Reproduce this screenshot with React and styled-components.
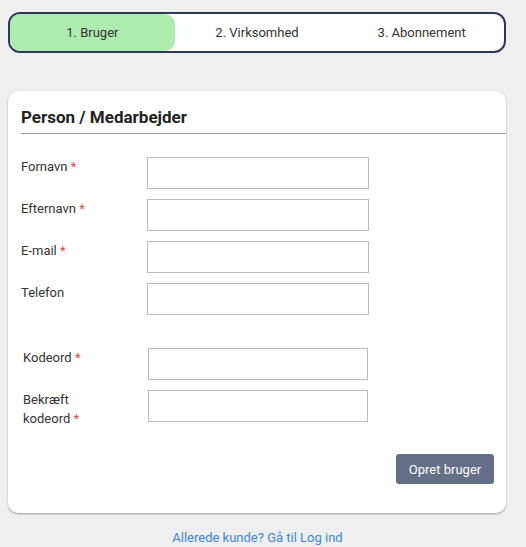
import styled, { createGlobalStyle } from 'styled-components';

const GlobalStyle = createGlobalStyle`
	html, body {
		margin: 0;
		padding: 0;
		background: #efefef;
		font-family: Roboto, "Liberation Sans", Arial, sans-serif;
		color: #333;
	}
	* { box-sizing: border-box; }
`

const Page = styled.div`
	width: 526px;
	padding: 12px 20px 0 8px;
`

const Stepper = styled.div`
	display: grid;
	grid-template-columns: repeat(3, 1fr);
	height: 41px;
	border: 2px solid #2b3a52;
	border-radius: 12px;
	background: #fff;
	overflow: hidden;
`

const Step = styled.div`
	display: flex;
	align-items: center;
	justify-content: center;
	font-size: 13px;
	color: #333;
	background: ${p => p.$active ? '#aeebae' : 'transparent'};
	border-radius: ${p => p.$active ? '0 10px 10px 0' : '0'};
`

const Card = styled.div`
	margin-top: 38px;
	background: #fff;
	border-radius: 10px;
	box-shadow: 0 1px 2px rgba(0, 0, 0, 0.35);
	padding: 14px 0 29px 13px;
`

const Title = styled.h2`
	margin: 0 0 23px;
	font-size: 17px;
	font-weight: 700;
	line-height: 24px;
	color: #222;
	padding-bottom: 4px;
	border-bottom: 1px solid #999;
`

const Group = styled.div`
	display: flex;
	flex-direction: column;
	gap: 10px;
	padding-left: ${p => p.$indent || 0}px;
	margin-top: ${p => p.$top || 0}px;
`

const Row = styled.div`
	display: flex;
	align-items: flex-start;
`

const Label = styled.label`
	width: ${p => p.$width}px;
	flex-shrink: 0;
	font-size: 13px;
	line-height: 19px;
	padding-right: ${p => p.$narrow ? 60 : 0}px;
	color: #333;
`

const Req = styled.span`
	color: #e0474c;
`

const Input = styled.input`
	width: ${p => p.$width}px;
	height: 32px;
	border: 1px solid #bcbcbc;
	border-radius: 0;
	background: #fff;
	font: inherit;
	padding: 0 6px;
	outline: none;
`

const Actions = styled.div`
	display: flex;
	justify-content: flex-end;
	padding-right: 12px;
	margin-top: 26px;
`

const Button = styled.button`
	height: 30px;
	width: 98px;
	border: none;
	border-radius: 3px;
	background: #636e87;
	color: #fff;
	font-family: inherit;
	font-size: 13px;
`

const Footer = styled.div`
	text-align: center;
	margin-top: 14px;
	padding-left: 1px;
`

const Link = styled.a`
	color: #3b86e0;
	font-size: 13px;
	text-decoration: none;
`

const personFields = [
	{ label: 'Fornavn', required: true },
	{ label: 'Efternavn', required: true },
	{ label: 'E-mail', required: true },
	{ label: 'Telefon' },
]

const passwordFields = [
	{ label: 'Kodeord', required: true },
	{ label: 'Bekræft kodeord', required: true, narrow: true },
]

function Field({ label, required, labelWidth, inputWidth, narrow }) {
	return (
		<Row>
			<Label $width={labelWidth} $narrow={narrow}>
				{label}{required && <> <Req>*</Req></>}
			</Label>
			<Input $width={inputWidth} />
		</Row>
	)
}

export default function App() {
	return (
		<>
			<GlobalStyle />
			<Page>
				<Stepper>
					<Step $active>1. Bruger</Step>
					<Step>2. Virksomhed</Step>
					<Step>3. Abonnement</Step>
				</Stepper>
				<Card>
					<Title>Person / Medarbejder</Title>
					<Group>
						{personFields.map(f => <Field key={f.label} {...f} labelWidth={126} inputWidth={222} />)}
					</Group>
					<Group $indent={2} $top={33}>
						{passwordFields.map(f => <Field key={f.label} {...f} labelWidth={125} inputWidth={220} />)}
					</Group>
					<Actions>
						<Button>Opret bruger</Button>
					</Actions>
				</Card>
				<Footer>
					<Link href="#">Allerede kunde? Gå til Log ind</Link>
				</Footer>
			</Page>
		</>
	)
}
